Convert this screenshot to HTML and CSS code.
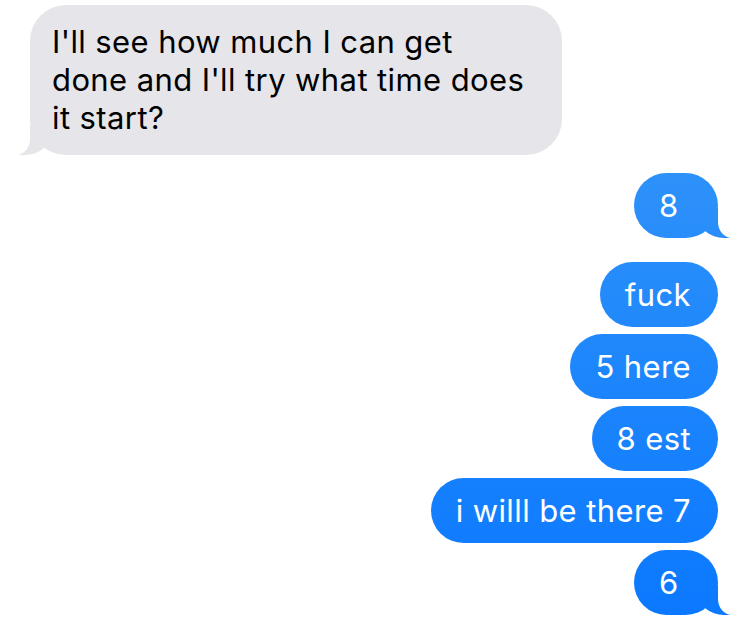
FILE: index.html
```html
<!DOCTYPE html>
<html lang="en">

<head>
  <meta charset="UTF-8">
  <meta name="viewport" content="width=device-width, initial-scale=1.0">
  <title>Messages</title>
  <link rel="stylesheet" href="styles.css">
</head>

<body>
  <div class="thread">
    <div class="bubble received tail">I'll see how much I can get done and I'll try what time does it start?</div>

    <div class="group">
      <div class="bubble sent tail">8</div>
    </div>

    <div class="group">
      <div class="bubble sent">fuck</div>
      <div class="bubble sent">5 here</div>
      <div class="bubble sent">8 est</div>
      <div class="bubble sent">i willl be there 7</div>
      <div class="bubble sent tail">6</div>
    </div>
  </div>
</body>

</html>
```

FILE: styles.css
```css
body {
  margin: 0;
  background: #fff;
  font-family: "Inter", "Noto Sans", sans-serif;
}

.thread {
  display: flex;
  flex-direction: column;
  padding: 5px 32px 0 30px;
}

.group {
  display: flex;
  flex-direction: column;
  align-items: flex-end;
  gap: 7px;
  margin-top: 18px;
}

.group + .group {
  margin-top: 24px;
}

.bubble {
  position: relative;
  z-index: 0;
  box-sizing: border-box;
  font-size: 31px;
  letter-spacing: 0.4px;
  line-height: 38px;
  padding: 13.5px 27px 13.5px 25px;
  border-radius: 33px;
}

.received {
  align-self: flex-start;
  width: 532px;
  padding: 18px 28px 18px 22px;
  border-radius: 36px;
  background: #e5e5ea;
  color: #000;
}

.sent {
  min-width: 84px;
  color: #fff;
  background: linear-gradient(#3b9bf8, #0a78ff) fixed;
}

/* the little curl under the last bubble of a group */
.tail::before,
.tail::after {
  content: "";
  position: absolute;
  z-index: -1;
  bottom: 0;
  height: 30px;
}

.sent.tail::before {
  right: -12px;
  width: 32px;
  background: inherit;
  border-bottom-left-radius: 26px 22px;
}

.sent.tail::after {
  right: -20px;
  width: 20px;
  background: #fff;
  border-bottom-left-radius: 14px 16px;
}

.received.tail::before {
  left: -11px;
  width: 32px;
  background: inherit;
  border-bottom-right-radius: 26px 22px;
}

.received.tail::after {
  left: -20px;
  width: 20px;
  background: #fff;
  border-bottom-right-radius: 14px 16px;
}
```
